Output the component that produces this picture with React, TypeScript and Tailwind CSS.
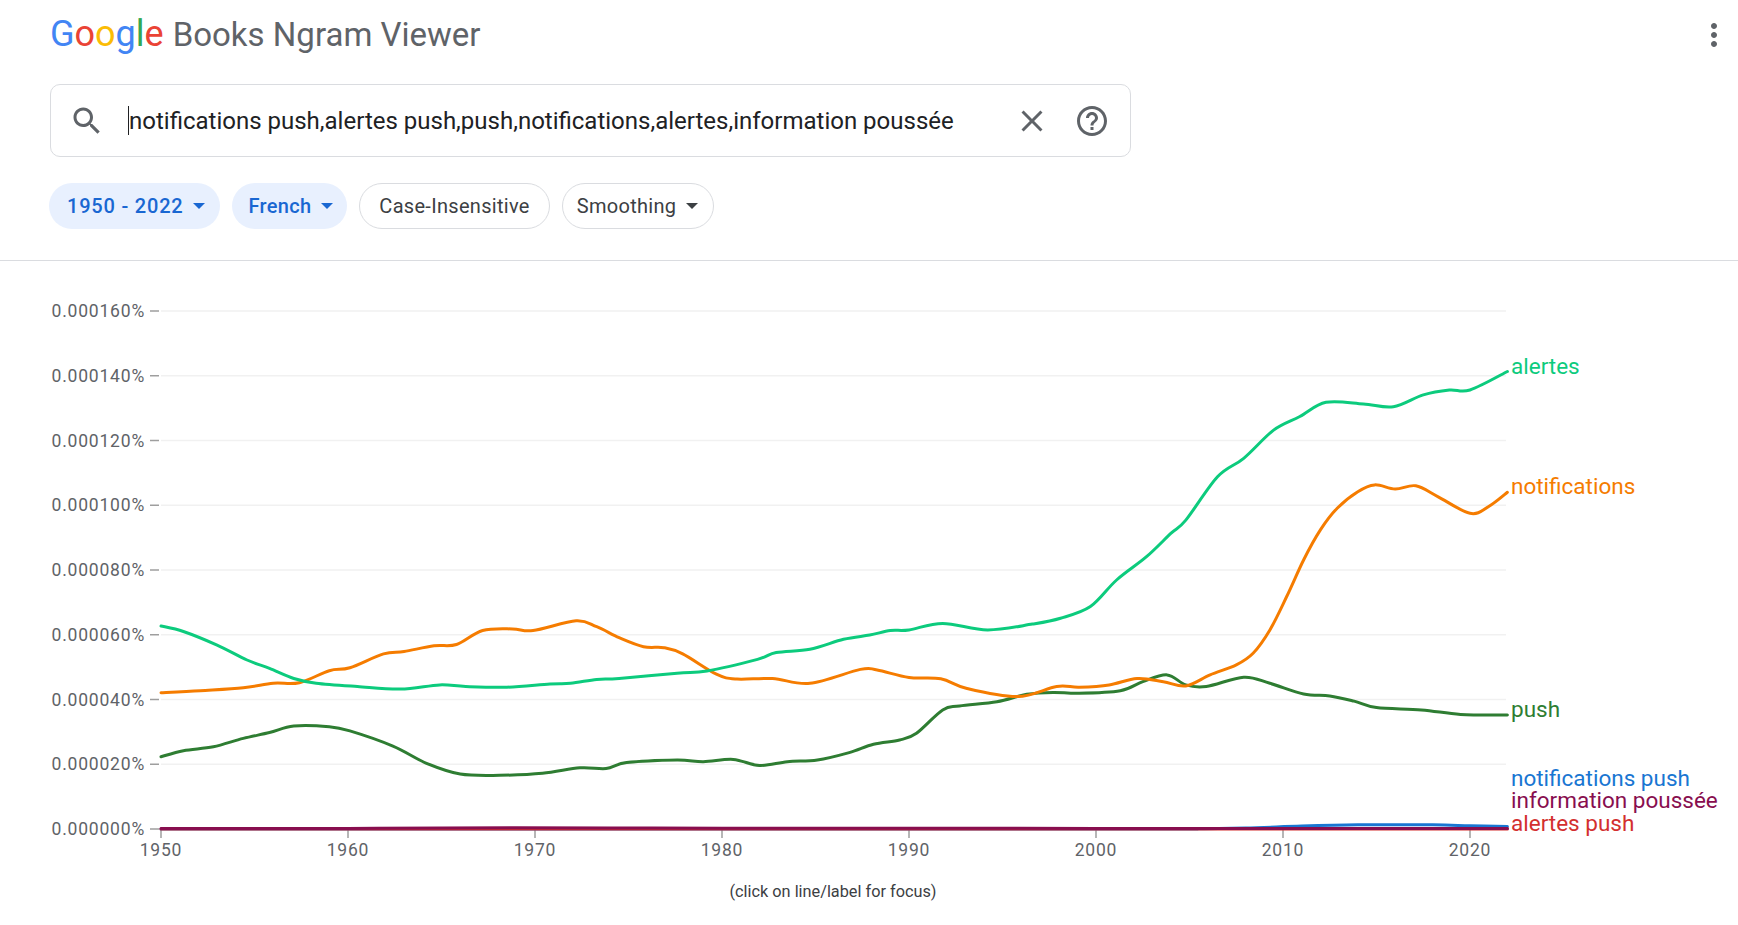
import React from 'react';

type Pt = [number, number];

interface Series {
  name: string;
  color: string;
  points: Pt[];
}

// chart geometry (page coordinates, the svg's viewBox starts at the divider)
const X0 = 161;
const PER_YEAR = 18.7;
const Y0 = 829;
const PER_UNIT = 3.2375; // px per 0.000001 %

const xOf = (year: number) => X0 + (year - 1950) * PER_YEAR;
const yOf = (v: number) => Y0 - v * PER_UNIT;

const series: Series[] = [
  {
    name: 'notifications push',
    color: '#1976d2',
    points: [[1950, 0], [2000, 0], [2005, 0.05], [2008, 0.3], [2011, 0.9], [2014, 1.3], [2018, 1.3], [2020, 1.0], [2022, 0.8]],
  },
  {
    name: 'alertes push',
    color: '#d32f2f',
    points: [[1950, 0], [2022, 0]],
  },
  {
    name: 'push',
    color: '#2e7d32',
    points: [
      [1950, 22.3], [1951.2, 24.2], [1952.8, 25.4], [1954.4, 28], [1955.8, 29.8], [1957.1, 31.8], [1959, 31.6],
      [1960.1, 30.3], [1962.4, 25.6], [1964.2, 20.3], [1966, 17], [1968.1, 16.6], [1970.4, 17.2], [1972.4, 18.9],
      [1973.8, 18.7], [1974.9, 20.5], [1977.6, 21.3], [1979, 20.8], [1980.6, 21.5], [1982, 19.6], [1983.5, 20.8],
      [1985.1, 21.3], [1986.8, 23.6], [1988.1, 26.2], [1989.5, 27.5], [1990.4, 29.6], [1991.8, 36.8], [1992.7, 38],
      [1994.7, 39.3], [1996.3, 41.6], [1997.7, 42.2], [1999.1, 41.9], [2001.3, 42.7], [2002.5, 45.5], [2003.8, 47.6],
      [2004.8, 44.5], [2005.9, 44], [2007.9, 46.9], [2009.3, 45], [2011.1, 41.7], [2012.5, 41.1], [2013.8, 39.5],
      [2015, 37.5], [2017.4, 36.8], [2019.5, 35.4], [2022, 35.2],
    ],
  },
  {
    name: 'notifications',
    color: '#f57c00',
    points: [
      [1950, 42.1], [1952.1, 42.7], [1954.4, 43.6], [1956, 45], [1957.4, 45.2], [1959, 48.9], [1960.1, 49.8],
      [1961.9, 54.1], [1963, 54.8], [1964.6, 56.6], [1965.8, 57], [1967.2, 61.3], [1968.8, 61.8], [1969.9, 61.3],
      [1972.2, 64.3], [1973.3, 62.5], [1974.5, 59.1], [1975.8, 56.3], [1976.9, 56], [1977.9, 54.1], [1979.7, 47.8],
      [1980.8, 46.3], [1982.7, 46.5], [1984.7, 45], [1987.4, 49.3], [1988.3, 49.1], [1990, 46.8], [1991.7, 46.4],
      [1993.1, 43.4], [1995.8, 40.9], [1997.9, 44], [1999.1, 43.8], [2000.7, 44.5], [2002.2, 46.5], [2003.6, 45.5],
      [2004.8, 44.2], [2006.1, 47.6], [2007.5, 50.7], [2008.4, 54.3], [2009.3, 61.5], [2010.2, 71.8], [2011.1, 83.1],
      [2012, 92.4], [2012.9, 99.1], [2014, 104.2], [2014.9, 106.3], [2016, 105], [2017.1, 106], [2018.3, 102.6],
      [2020, 97.5], [2021, 99.6], [2022, 104],
    ],
  },
  {
    name: 'alertes',
    color: '#0ccb7d',
    points: [
      [1950, 62.7], [1951.2, 61], [1953, 56.8], [1954.6, 52.2], [1955.8, 49.6], [1957.1, 46.5], [1958.3, 45],
      [1960.5, 44], [1962.8, 43.2], [1964.9, 44.5], [1966.3, 44], [1968.5, 43.8], [1970.8, 44.8], [1971.9, 45],
      [1973.3, 46.2], [1974.5, 46.5], [1977.6, 48.1], [1979.2, 48.8], [1981.9, 52.4], [1982.9, 54.5], [1984.7, 55.5],
      [1986.5, 58.6], [1987.9, 59.9], [1989, 61.3], [1990, 61.5], [1991.8, 63.5], [1994.2, 61.5], [1996.6, 63.3],
      [1998.1, 65.1], [1999.7, 68.7], [2001.1, 76.9], [2002.7, 84.1], [2004, 91.3], [2004.8, 95.4], [2006.5, 108.8],
      [2007.9, 114.5], [2009.5, 123.2], [2010.9, 127.4], [2012.3, 131.8], [2014.3, 131.3], [2015.9, 130.4],
      [2017.5, 134.1], [2018.9, 135.6], [2020, 135.6], [2022, 141.3],
    ],
  },
  {
    name: 'information poussée',
    color: '#880e4f',
    points: [[1950, 0.2], [1960, 0.2], [1969, 0.4], [1975, 0.3], [1980, 0.25], [2000, 0.2], [2022, 0.15]],
  },
];

// where each series label sits (baseline)
const labelY: Record<string, number> = {
  alertes: 373.5,
  notifications: 494.3,
  push: 717,
  'notifications push': 786,
  'information poussée': 808.3,
  'alertes push': 831,
};

function smoothPath(points: Pt[]) {
  const p = points.map(([yr, v]) => [xOf(yr), yOf(v)]);
  let d = `M${p[0][0].toFixed(1)},${p[0][1].toFixed(1)}`;
  for (let i = 0; i < p.length - 1; i++) {
    const p0 = p[i - 1] || p[i];
    const p1 = p[i];
    const p2 = p[i + 1];
    const p3 = p[i + 2] || p2;
    const c1x = p1[0] + (p2[0] - p0[0]) / 6;
    const c1y = p1[1] + (p2[1] - p0[1]) / 6;
    const c2x = p2[0] - (p3[0] - p1[0]) / 6;
    const c2y = p2[1] - (p3[1] - p1[1]) / 6;
    d += ` C${c1x.toFixed(1)},${c1y.toFixed(1)} ${c2x.toFixed(1)},${c2y.toFixed(1)} ${p2[0].toFixed(1)},${p2[1].toFixed(1)}`;
  }
  return d;
}

const Caret = ({ className = '' }: { className?: string }) => (
  <svg width="12" height="6" viewBox="0 0 12 6" className={className}>
    <polygon points="0,0 12,0 6,6" fill="currentColor" />
  </svg>
);

function Chart() {
  const yTicks = [0, 20, 40, 60, 80, 100, 120, 140, 160];
  const years = [1950, 1960, 1970, 1980, 1990, 2000, 2010, 2020];

  return (
    <svg
      width={1738}
      height={664}
      viewBox="0 261 1738 664"
      className="block"
      style={{ fontFamily: 'Roboto, "Liberation Sans", sans-serif' }}
    >
      {/* grid + y axis */}
      {yTicks.map((t) => (
        <g key={t}>
          {t > 0 && <line x1={161} x2={1506} y1={yOf(t)} y2={yOf(t)} stroke="#f1f1f1" strokeWidth={1.5} />}
          <line x1={150} x2={159} y1={yOf(t)} y2={yOf(t)} stroke="#9e9e9e" strokeWidth={1.5} />
          <text
            x={145}
            y={yOf(t) + 6.2}
            textAnchor="end"
            fontSize={17.5}
            letterSpacing={0.8}
            fill="#5f6368"
          >
            {`0.000${String(t).padStart(3, '0')}%`}
          </text>
        </g>
      ))}

      {/* x axis */}
      {years.map((y) => (
        <g key={y}>
          <line x1={xOf(y)} x2={xOf(y)} y1={830} y2={838} stroke="#9e9e9e" strokeWidth={1.5} />
          <text x={xOf(y)} y={856} textAnchor="middle" fontSize={17.5} letterSpacing={0.8} fill="#5f6368">
            {y}
          </text>
        </g>
      ))}

      {/* lines */}
      {series.map((s) => (
        <path
          key={s.name}
          d={smoothPath(s.points)}
          fill="none"
          stroke={s.color}
          strokeWidth={3}
          strokeLinejoin="round"
          strokeLinecap="round"
        />
      ))}

      {/* labels */}
      {series.map((s) => (
        <text key={s.name} x={1511} y={labelY[s.name]} fontSize={22.5} fill={s.color}>
          {s.name}
        </text>
      ))}

      <text x={833} y={897} textAnchor="middle" fontSize={16.3} fill="#3c4043">
        (click on line/label for focus)
      </text>
    </svg>
  );
}

export default function App() {
  return (
    <div className="w-[1738px] min-h-[925px] bg-white font-['Roboto','Liberation_Sans',sans-serif]">
      <header className="h-[261px] border-b border-[#dadce0]">
        {/* top bar */}
        <div className="flex h-[70px] items-center justify-between pl-[50px] pr-[6px]">
          <div className="mb-[2px] flex items-baseline">
            <span className="text-[36px] leading-[40px]">
              <span className="text-[#4285f4]">G</span>
              <span className="text-[#ea4335]">o</span>
              <span className="text-[#fbbc05]">o</span>
              <span className="text-[#4285f4]">g</span>
              <span className="text-[#34a853]">l</span>
              <span className="text-[#ea4335]">e</span>
            </span>
            <span className="ml-[9px] text-[33px] leading-[40px] text-[#5f6368]">Books Ngram Viewer</span>
          </div>
          <svg width="36" height="36" viewBox="0 0 24 24" fill="#5f6368">
            <path d="M12 8c1.1 0 2-.9 2-2s-.9-2-2-2-2 .9-2 2 .9 2 2 2zm0 2c-1.1 0-2 .9-2 2s.9 2 2 2 2-.9 2-2-.9-2-2-2zm0 6c-1.1 0-2 .9-2 2s.9 2 2 2 2-.9 2-2-.9-2-2-2z" />
          </svg>
        </div>

        {/* search box */}
        <div className="ml-[50px] mt-[14px] flex h-[73px] w-[1081px] items-center rounded-[10px] border border-[#dadce0] pl-[18px] pr-[20px]">
          <svg width="36" height="36" viewBox="0 0 24 24" fill="#5f6368" className="shrink-0">
            <path d="M15.5 14h-.79l-.28-.27C15.41 12.59 16 11.11 16 9.5 16 5.910 13.09 3 9.5 3S3 5.91 3 9.5 5.91 16 9.5 16c1.61 0 3.09-.59 4.23-1.57l.27.28v.79l5 4.99L20.49 19l-4.99-5zm-6 0C7.01 14 5 11.99 5 9.5S7.01 5 9.5 5 14 7.01 14 9.5 11.99 14 9.5 14z" />
          </svg>
          <div className="ml-[23px] flex flex-1 items-center">
            <span className="h-[29px] w-px bg-[#202124]" />
            <span className="text-[24px] text-[#202124]">
              notifications push,alertes push,push,notifications,alertes,information poussée
            </span>
          </div>
          <svg width="36" height="36" viewBox="0 0 24 24" fill="#5f6368" className="shrink-0">
            <path d="M19 6.41L17.59 5 12 10.59 6.41 5 5 6.41 10.59 12 5 17.59 6.41 19 12 13.41 17.59 19 19 17.59 13.41 12z" />
          </svg>
          <svg width="36" height="36" viewBox="0 0 24 24" fill="#5f6368" className="ml-[24px] shrink-0">
            <path d="M11 18h2v-2h-2v2zm1-16C6.48 2 2 6.48 2 12s4.48 10 10 10 10-4.480 10-10S17.52 2 12 2zm0 18c-4.41 0-8-3.590-8-8s3.59-8 8-8 8 3.59 8 8-3.59 8-8 8zm0-14c-2.21 0-4 1.79-4 4h2c0-1.1.9-2 2-2s2 .9 2 2c0 2-3 1.75-3 5h2c0-2.25 3-2.5 3-5 0-2.21-1.79-4-4-4z" />
          </svg>
        </div>

        {/* filter chips */}
        <div className="ml-[49px] mt-[26px] flex gap-[12px] text-[20px] tracking-[0.3px]">
          <button className="flex h-[46px] items-center gap-[10px] rounded-full bg-[#e8f0fe] pl-[18px] pr-[15px] font-medium text-[#1967d2]">
            <span className="tracking-[0.8px]">1950 - 2022</span>
            <Caret />
          </button>
          <button className="flex h-[46px] items-center gap-[10px] rounded-full bg-[#e8f0fe] pl-[16px] pr-[14px] font-medium text-[#1967d2]">
            <span>French</span>
            <Caret />
          </button>
          <button className="flex h-[46px] items-center rounded-full border border-[#dadce0] px-[19px] text-[#3c4043]">
            Case-Insensitive
          </button>
          <button className="flex h-[46px] items-center gap-[10px] rounded-full border border-[#dadce0] pl-[14px] pr-[15px] text-[#3c4043]">
            <span>Smoothing</span>
            <Caret />
          </button>
        </div>
      </header>

      <Chart />
    </div>
  );
}
